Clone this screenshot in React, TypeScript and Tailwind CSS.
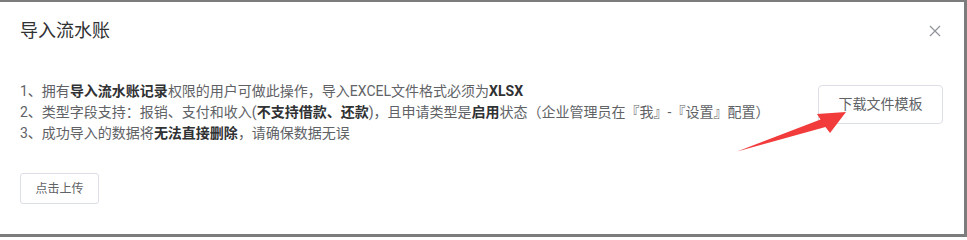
import React from "react";

export default function App() {
  return (
    <div className="relative h-[237px] w-[967px] overflow-hidden bg-[#7c7c7c] pt-[2px] pr-[3px] pb-[3px]" style={{ fontFamily: 'Roboto, "Noto Sans CJK SC", sans-serif' }}>
      <div className="h-[232px] w-[964px] bg-white">
        <div className="flex items-start justify-between pl-5 pr-[23px] pt-[17px]">
          <span className="text-[18px] leading-[24px] text-[#303133]">导入流水账</span>
          <svg width="12" height="12" viewBox="0 0 12 12" className="mt-[6px]">
            <path d="M1 1L11 11M11 1L1 11" stroke="#909399" strokeWidth="1.2" />
          </svg>
        </div>
        <div className="flex items-start justify-between pl-5 pr-[21px] pt-[38px]">
          <div className="text-[14px] leading-[21px] text-[#606266]">
            <div>1、拥有<b className="font-bold text-[#303133]">导入流水账记录</b>权限的用户可做此操作，导入EXCEL文件格式必须为<b className="font-bold text-[#303133]">XLSX</b></div>
            <div>2、类型字段支持：报销、支付和收入(<b className="font-bold text-[#303133]">不支持借款、还款</b>)，且申请类型是<b className="font-bold text-[#303133]">启用</b>状态（企业管理员在『我』-『设置』配置）</div>
            <div>3、成功导入的数据将<b className="font-bold text-[#303133]">无法直接删除</b>，请确保数据无误</div>
          </div>
          <button className="mt-[4px] h-[39px] w-[125px] rounded-[4px] border border-[#dcdfe6] bg-white text-[14px] text-[#606266]">下载文件模板</button>
        </div>
        <div className="pl-5 pt-[29px]">
          <button className="h-[31px] w-[79px] rounded-[3px] border border-[#dcdfe6] bg-white text-[12px] text-[#606266]">点击上传</button>
        </div>
      </div>
      <svg className="pointer-events-none absolute left-0 top-0" width="967" height="237" viewBox="0 0 967 237">
        <polygon points="737,151.5 820.5,119.5 817,114 846,112 830,133 825.5,127" fill="#f23b3b" />
      </svg>
    </div>
  );
}
